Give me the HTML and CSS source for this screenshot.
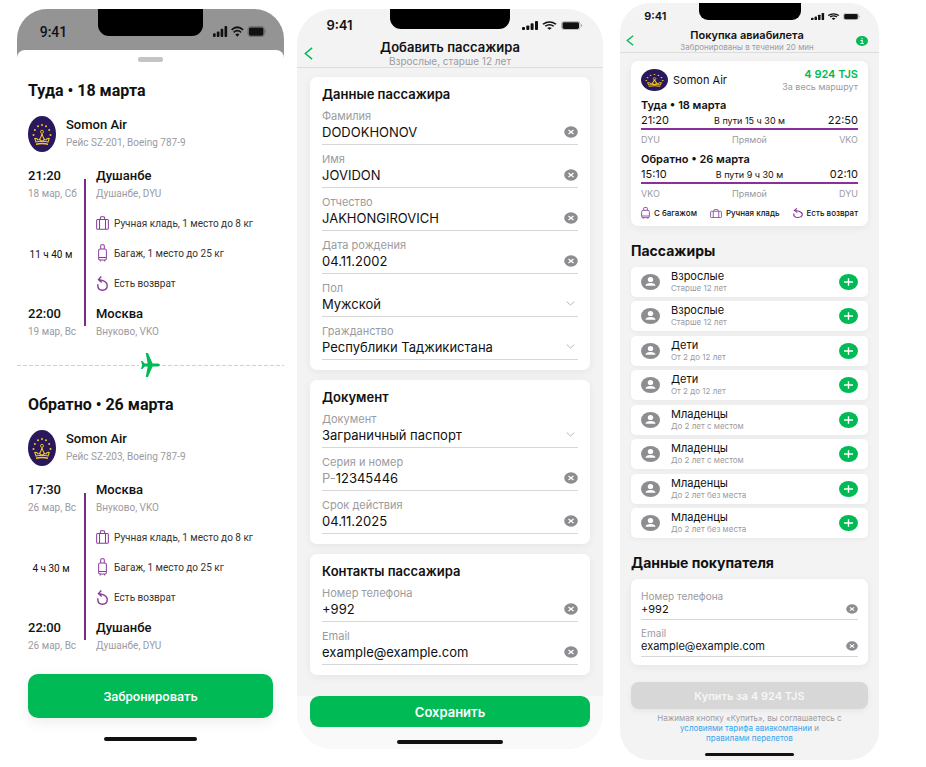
FILE: index.html
```
<!DOCTYPE html>
<html lang="ru">
<head>
  <meta charset="UTF-8">
  <meta name="viewport" content="width=device-width, initial-scale=1.0">
  <title>Покупка авиабилета</title>
  <link rel="stylesheet" href="styles.css">
</head>
<body>
  <svg class="sprite" aria-hidden="true">
    <symbol id="status" viewBox="0 0 61 12" preserveAspectRatio="none">
      <rect x="0" y="8" width="3" height="4" rx="1"/>
      <rect x="4.3" y="6" width="3" height="6" rx="1"/>
      <rect x="8.6" y="3" width="3" height="9" rx="1"/>
      <rect x="13" y="0" width="3" height="12" rx="1"/>
      <path d="M21 4.3Q27.500-1.500 34 4.300M23.300 6.900Q27.500 3.100 31.700 6.900" fill="none" stroke="currentColor" stroke-width="1.900"/>
      <path d="M25.200 9.300Q27.500 7.300 29.800 9.300L27.500 11.800Z"/>
      <rect x="39.500" y=".5" width="18.500" height="11" rx="3" fill="none" stroke="currentColor" stroke-opacity=".3"/>
      <rect x="40.500" y="1.500" width="16.500" height="9" rx="1.800"/>
      <path d="M59 4Q61 6 59 8Z" opacity=".4"/>
    </symbol>
    <symbol id="somon" viewBox="0 0 28 36" preserveAspectRatio="none">
      <ellipse cx="14" cy="18" rx="14" ry="18" fill="#2a185c"/>
      <g fill="#f2c91d">
        <circle cx="14" cy="9" r="1"/><circle cx="10" cy="10.300" r="1"/><circle cx="18" cy="10.300" r="1"/>
        <circle cx="6.800" cy="14" r="1"/><circle cx="21.200" cy="14" r="1"/>
        <circle cx="5.500" cy="19" r="1"/><circle cx="22.500" cy="19" r="1"/>
        <path d="M8 27.500Q14 26 20 27.500V29Q14 27.700 8 29Z"/>
      </g>
      <path d="M8 26L6.800 22.500Q9 22 10 24Q12.500 24 14 17.500Q15.500 24 18 24Q19 22 21.200 22.500L20 26Q14 24.500 8 26ZM11 23L14 25.500L17 23" fill="none" stroke="#f2c91d" stroke-width="1.100"/>
      <circle cx="14" cy="15.800" r="1.500" fill="none" stroke="#f2c91d" stroke-width=".9"/>
    </symbol>
    <symbol id="bag" viewBox="0 0 14 14" preserveAspectRatio="none">
      <path d="M1.800 3.500H12.200Q13.300 3.500 13.300 4.600V12.200Q13.300 13.300 12.200 13.300H1.800Q.7 13.300.7 12.200V4.600Q.7 3.500 1.800 3.500ZM3.800 3.500V13.300M10.200 3.500V13.300M4.700 3.300V1.700Q4.700.7 5.700.7H8.300Q9.300.7 9.300 1.700V3.300" fill="none" stroke="currentColor" stroke-width="1.100"/>
    </symbol>
    <symbol id="case" viewBox="0 0 10 18" preserveAspectRatio="none">
      <path d="M2.500 5H7.500Q9.300 5 9.300 6.800V14.500Q9.300 16 7.800 16H2.200Q.7 16 .7 14.500V6.800Q.7 5 2.500 5ZM3 5V1.700Q3 .7 4 .7H6Q7 .7 7 1.700V5M.7 13.500H9.300M2.500 16V17.500M7.500 16V17.500" fill="none" stroke="currentColor" stroke-width="1.100"/>
    </symbol>
    <symbol id="refund" viewBox="0 0 11 15" preserveAspectRatio="none">
      <path d="M4.300.5L1.500 3.600L4.800 6.500M1.800 3.600Q4.500 4 6.500 4.900Q10.200 6.500 10.200 9.500Q10.200 14.200 5.500 14.200Q.8 14.200.8 9.300V8.200" fill="none" stroke="currentColor" stroke-width="1.400"/>
    </symbol>
    <symbol id="plane" viewBox="0 0 20 24" preserveAspectRatio="none">
      <path d="M0 8H1.500L4 10.500H7L5 0H7.300L12.200 10.400H17.800Q20 10.700 20 12Q20 13.300 17.800 13.600H12.200L7.300 24H5L7 13.500H4L1.500 16H0L1.200 12Z"/>
    </symbol>
    <symbol id="back" viewBox="0 0 10 14" preserveAspectRatio="none">
      <path d="M9 1L1.500 7L9 13" fill="none" stroke="currentColor" stroke-width="1.700"/>
    </symbol>
    <symbol id="clear" viewBox="0 0 14 12" preserveAspectRatio="none">
      <ellipse cx="7" cy="6" rx="6.800" ry="5.700" fill="#8c8c91"/>
      <path d="M4.500 4L9.500 8M9.500 4L4.500 8" stroke="#fff" stroke-width="1.300"/>
    </symbol>
    <symbol id="down" viewBox="0 0 10 5" preserveAspectRatio="none">
      <path d="M.7.6L5 4L9.300.6" fill="none" stroke="currentColor"/>
    </symbol>
    <symbol id="user" viewBox="0 0 19 16" preserveAspectRatio="none">
      <ellipse cx="9.500" cy="8" rx="9.500" ry="8" fill="#8c8c91"/>
      <ellipse cx="9.500" cy="5.500" rx="2.700" ry="2.600" fill="#fff"/>
      <path d="M4.500 11.800Q4.800 9 9.500 9Q14.200 9 14.500 11.800Z" fill="#fff"/>
    </symbol>
    <symbol id="plus" viewBox="0 0 19 16" preserveAspectRatio="none">
      <ellipse cx="9.500" cy="8" rx="9.500" ry="8" fill="#00ba55"/>
      <path d="M5 8H14M9.500 4.200V11.800" stroke="#fff" stroke-width="1.400"/>
    </symbol>
    <symbol id="info" viewBox="0 0 11 10" preserveAspectRatio="none">
      <ellipse cx="5.500" cy="5" rx="5.500" ry="5" fill="#00ba55"/>
      <path d="M5.500 2V3.200M4.200 4.500H5.700V7.500M4 7.500H7.200" fill="none" stroke="#fff"/>
    </symbol>
  </svg>

  <main class="screens">
    <!-- Flight details -->
    <section class="phone phone-details">
      <div class="status">
        <span class="clock">9:41</span><span class="notch"></span>
        <svg class="status-icons"><use href="#status"/></svg>
      </div>
      <div class="sheet">
        <div class="grabber"></div>
        <article class="flight">
          <h2>Туда • 18 марта</h2>
          <div class="airline">
            <svg class="logo"><use href="#somon"/></svg>
            <div><strong>Somon Air</strong><small>Рейс SZ-201, Boeing 787-9</small></div>
          </div>
          <div class="route">
            <div class="times">
              <div><strong>21:20</strong><small>18 мар, Сб</small></div>
              <span class="duration">11 ч 40 м</span>
              <div><strong>22:00</strong><small>19 мар, Вс</small></div>
            </div>
            <div class="line"></div>
            <div class="stops">
              <div><strong>Душанбе</strong><small>Душанбе, DYU</small></div>
              <ul class="options">
                <li><svg class="icon-bag"><use href="#bag"/></svg>Ручная кладь, 1 место до 8 кг</li>
                <li><svg class="icon-case"><use href="#case"/></svg>Багаж, 1 место до 25 кг</li>
                <li><svg class="icon-refund"><use href="#refund"/></svg>Есть возврат</li>
              </ul>
              <div><strong>Москва</strong><small>Внуково, VKO</small></div>
            </div>
          </div>
        </article>
        <div class="divider"><svg class="plane"><use href="#plane"/></svg></div>
        <article class="flight">
          <h2>Обратно • 26 марта</h2>
          <div class="airline">
            <svg class="logo"><use href="#somon"/></svg>
            <div><strong>Somon Air</strong><small>Рейс SZ-203, Boeing 787-9</small></div>
          </div>
          <div class="route">
            <div class="times">
              <div><strong>17:30</strong><small>26 мар, Вс</small></div>
              <span class="duration">4 ч 30 м</span>
              <div><strong>22:00</strong><small>26 мар, Вс</small></div>
            </div>
            <div class="line"></div>
            <div class="stops">
              <div><strong>Москва</strong><small>Внуково, VKO</small></div>
              <ul class="options">
                <li><svg class="icon-bag"><use href="#bag"/></svg>Ручная кладь, 1 место до 8 кг</li>
                <li><svg class="icon-case"><use href="#case"/></svg>Багаж, 1 место до 25 кг</li>
                <li><svg class="icon-refund"><use href="#refund"/></svg>Есть возврат</li>
              </ul>
              <div><strong>Душанбе</strong><small>Душанбе, DYU</small></div>
            </div>
          </div>
        </article>
        <button class="button" type="button">Забронировать</button>
        <div class="home"></div>
      </div>
    </section>

    <!-- Add passenger -->
    <section class="phone phone-passenger">
      <div class="status">
        <span class="clock">9:41</span><span class="notch"></span>
        <svg class="status-icons"><use href="#status"/></svg>
      </div>
      <header class="topbar">
        <button class="icon-button" type="button" aria-label="Назад"><svg class="icon-back"><use href="#back"/></svg></button>
        <div class="topbar-title"><h1>Добавить пассажира</h1><p>Взрослые, старше 12 лет</p></div>
      </header>
      <form class="content">
        <fieldset class="card">
          <h3>Данные пассажира</h3>
          <div class="field">
            <label for="surname">Фамилия</label>
            <div class="control"><input id="surname" type="text" value="DODOKHONOV"><button class="icon-button" type="button" aria-label="Очистить"><svg class="icon-clear"><use href="#clear"/></svg></button></div>
          </div>
          <div class="field">
            <label for="name">Имя</label>
            <div class="control"><input id="name" type="text" value="JOVIDON"><button class="icon-button" type="button" aria-label="Очистить"><svg class="icon-clear"><use href="#clear"/></svg></button></div>
          </div>
          <div class="field">
            <label for="patronymic">Отчество</label>
            <div class="control"><input id="patronymic" type="text" value="JAKHONGIROVICH"><button class="icon-button" type="button" aria-label="Очистить"><svg class="icon-clear"><use href="#clear"/></svg></button></div>
          </div>
          <div class="field">
            <label for="birth">Дата рождения</label>
            <div class="control"><input id="birth" type="text" value="04.11.2002"><button class="icon-button" type="button" aria-label="Очистить"><svg class="icon-clear"><use href="#clear"/></svg></button></div>
          </div>
          <div class="field">
            <label for="sex">Пол</label>
            <div class="control"><select id="sex"><option>Мужской</option></select><svg class="icon-down"><use href="#down"/></svg></div>
          </div>
          <div class="field">
            <label for="country">Гражданство</label>
            <div class="control"><select id="country"><option>Республики Таджикистана</option></select><svg class="icon-down"><use href="#down"/></svg></div>
          </div>
        </fieldset>
        <fieldset class="card">
          <h3>Документ</h3>
          <div class="field">
            <label for="document">Документ</label>
            <div class="control"><select id="document"><option>Заграничный паспорт</option></select><svg class="icon-down"><use href="#down"/></svg></div>
          </div>
          <div class="field">
            <label for="number">Серия и номер</label>
            <div class="control"><span class="prefix">P-</span><input id="number" type="text" value="12345446"><button class="icon-button" type="button" aria-label="Очистить"><svg class="icon-clear"><use href="#clear"/></svg></button></div>
          </div>
          <div class="field">
            <label for="expires">Срок действия</label>
            <div class="control"><input id="expires" type="text" value="04.11.2025"><button class="icon-button" type="button" aria-label="Очистить"><svg class="icon-clear"><use href="#clear"/></svg></button></div>
          </div>
        </fieldset>
        <fieldset class="card">
          <h3>Контакты пассажира</h3>
          <div class="field">
            <label for="phone">Номер телефона</label>
            <div class="control"><input id="phone" type="tel" value="+992"><button class="icon-button" type="button" aria-label="Очистить"><svg class="icon-clear"><use href="#clear"/></svg></button></div>
          </div>
          <div class="field">
            <label for="email">Email</label>
            <div class="control"><input id="email" type="email" value="example@example.com"><button class="icon-button" type="button" aria-label="Очистить"><svg class="icon-clear"><use href="#clear"/></svg></button></div>
          </div>
        </fieldset>
      </form>
      <footer class="actions">
        <button class="button" type="button">Сохранить</button>
        <div class="home"></div>
      </footer>
    </section>

    <!-- Checkout -->
    <section class="phone phone-checkout">
      <div class="status">
        <span class="clock">9:41</span><span class="notch"></span>
        <svg class="status-icons"><use href="#status"/></svg>
      </div>
      <header class="topbar">
        <button class="icon-button" type="button" aria-label="Назад"><svg class="icon-back"><use href="#back"/></svg></button>
        <div class="topbar-title"><h1>Покупка авиабилета</h1><p>Забронированы в течении 20 мин</p></div>
        <button class="icon-button" type="button" aria-label="Информация"><svg class="icon-info"><use href="#info"/></svg></button>
      </header>
      <div class="content">
        <article class="card ticket">
          <div class="ticket-head">
            <svg class="logo"><use href="#somon"/></svg>
            <span class="ticket-airline">Somon Air</span>
            <div class="price"><strong>4 924 TJS</strong><small>За весь маршрут</small></div>
          </div>
          <div class="leg">
            <h3>Туда • 18 марта</h3>
            <div class="leg-row"><span>21:20</span><span class="leg-duration">В пути 15 ч 30 м</span><span>22:50</span></div>
            <div class="leg-row codes"><span>DYU</span><span>Прямой</span><span>VKO</span></div>
          </div>
          <div class="leg">
            <h3>Обратно • 26 марта</h3>
            <div class="leg-row"><span>15:10</span><span class="leg-duration">В пути 9 ч 30 м</span><span>02:10</span></div>
            <div class="leg-row codes"><span>VKO</span><span>Прямой</span><span>DYU</span></div>
          </div>
          <ul class="features">
            <li><svg class="icon-case"><use href="#case"/></svg>С багажом</li>
            <li><svg class="icon-bag"><use href="#bag"/></svg>Ручная кладь</li>
            <li><svg class="icon-refund"><use href="#refund"/></svg>Есть возврат</li>
          </ul>
        </article>

        <h2>Пассажиры</h2>
        <div class="groups">
          <ul class="group">
            <li class="person"><svg class="icon-user"><use href="#user"/></svg><div><span>Взрослые</span><small>Старше 12 лет</small></div><button class="icon-button" type="button" aria-label="Добавить"><svg class="icon-user"><use href="#plus"/></svg></button></li>
            <li class="person"><svg class="icon-user"><use href="#user"/></svg><div><span>Взрослые</span><small>Старше 12 лет</small></div><button class="icon-button" type="button" aria-label="Добавить"><svg class="icon-user"><use href="#plus"/></svg></button></li>
          </ul>
          <ul class="group">
            <li class="person"><svg class="icon-user"><use href="#user"/></svg><div><span>Дети</span><small>От 2 до 12 лет</small></div><button class="icon-button" type="button" aria-label="Добавить"><svg class="icon-user"><use href="#plus"/></svg></button></li>
            <li class="person"><svg class="icon-user"><use href="#user"/></svg><div><span>Дети</span><small>От 2 до 12 лет</small></div><button class="icon-button" type="button" aria-label="Добавить"><svg class="icon-user"><use href="#plus"/></svg></button></li>
          </ul>
          <ul class="group">
            <li class="person"><svg class="icon-user"><use href="#user"/></svg><div><span>Младенцы</span><small>До 2 лет с местом</small></div><button class="icon-button" type="button" aria-label="Добавить"><svg class="icon-user"><use href="#plus"/></svg></button></li>
            <li class="person"><svg class="icon-user"><use href="#user"/></svg><div><span>Младенцы</span><small>До 2 лет с местом</small></div><button class="icon-button" type="button" aria-label="Добавить"><svg class="icon-user"><use href="#plus"/></svg></button></li>
          </ul>
          <ul class="group">
            <li class="person"><svg class="icon-user"><use href="#user"/></svg><div><span>Младенцы</span><small>До 2 лет без места</small></div><button class="icon-button" type="button" aria-label="Добавить"><svg class="icon-user"><use href="#plus"/></svg></button></li>
            <li class="person"><svg class="icon-user"><use href="#user"/></svg><div><span>Младенцы</span><small>До 2 лет без места</small></div><button class="icon-button" type="button" aria-label="Добавить"><svg class="icon-user"><use href="#plus"/></svg></button></li>
          </ul>
        </div>

        <h2>Данные покупателя</h2>
        <form class="card buyer">
          <div class="field">
            <label for="buyer-phone">Номер телефона</label>
            <div class="control"><input id="buyer-phone" type="tel" value="+992"><button class="icon-button" type="button" aria-label="Очистить"><svg class="icon-clear"><use href="#clear"/></svg></button></div>
          </div>
          <div class="field">
            <label for="buyer-email">Email</label>
            <div class="control"><input id="buyer-email" type="email" value="example@example.com"><button class="icon-button" type="button" aria-label="Очистить"><svg class="icon-clear"><use href="#clear"/></svg></button></div>
          </div>
        </form>
        <button class="button" type="button" disabled>Купить за 4 924 TJS</button>
        <p class="legal">Нажимая кнопку «Купить», вы соглашаетесь с<br><a href="#">условиями тарифа авиакомпании</a> и<br><a href="#">правилами перелетов</a></p>
      </div>
      <div class="home"></div>
    </section>
  </main>
</body>
</html>
```
FILE: styles.css
```
* {
  box-sizing: border-box;
}
body {
  margin: 0;
  background: #fff;
  color: #111;
  font-family: Inter, Roboto, sans-serif;
}
h1, h2, h3, p, ul, fieldset {
  margin: 0;
  padding: 0;
  border: 0;
  min-width: 0;
}
h1, h3 {
  font-weight: 600;
}
ul {
  list-style: none;
}
svg {
  display: block;
  flex: none;
  fill: currentColor;
}
small {
  display: block;
  color: #9b9b9f;
}
.sprite {
  position: absolute;
  width: 0;
  height: 0;
}
.screens {
  display: flex;
  align-items: flex-start;
  gap: 13px;
  padding: 3px 47px 0 17px;
}
.phone {
  min-width: 0;
  overflow: hidden;
  background: #f3f3f3;
}
.status {
  display: grid;
  justify-items: center;
}
.clock {
  padding-right: 8px;
  font-weight: 600;
}
.notch {
  width: 100%;
  background: #000;
}
.status-icons {
  margin-right: 8px;
}
.home {
  width: 34%;
  height: 4px;
  margin: 0 auto;
  border-radius: 2px;
  background: #111;
}
.button {
  display: block;
  width: 100%;
  padding: 0;
  border: 0;
  background: #00ba55;
  color: #fff;
  font-family: inherit;
  font-weight: 600;
}
.icon-button {
  flex: none;
  padding: 0;
  border: 0;
  background: none;
  color: #00ba55;
}

/* flight details */
.phone-details {
  flex: 267 1 0;
  margin-top: 6px;
  border-radius: 30px 30px 0 0;
  background: #949494;
  font-family: Roboto, sans-serif;
}
.phone-details .status {
  grid-template-columns: 1fr 105px 1fr;
  height: 41px;
}
.phone-details .clock {
  font-size: 14px;
  font-weight: 500;
  line-height: 46px;
}
.phone-details .notch {
  height: 27px;
  border-radius: 0 0 11px 11px;
}
.phone-details .status-icons {
  width: 54px;
  height: 11px;
  margin-top: 17px;
}
.sheet {
  padding: 7px 11px 17px;
  border-radius: 8px 8px 0 0;
  background: #fff;
}
.grabber {
  width: 25px;
  height: 5px;
  margin: 0 auto 15px;
  border-radius: 2px;
  background: #c4c4c6;
}
.flight h2 {
  margin-bottom: 11px;
  font-size: 16px;
  line-height: 28px;
}
.flight strong {
  display: block;
  font-size: 13px;
  font-weight: 500;
  line-height: 18px;
  white-space: nowrap;
}
.flight small {
  font-size: 10px;
  line-height: 18px;
  white-space: nowrap;
}
.airline {
  display: flex;
  align-items: flex-end;
  gap: 10px;
  margin-bottom: 15px;
}
.airline .logo {
  width: 28px;
  height: 36px;
}
.route {
  display: grid;
  grid-template-columns: 46px 2px 1fr;
  gap: 10px;
}
.times, .stops {
  display: flex;
  flex-direction: column;
  justify-content: space-between;
}
.duration {
  text-align: center;
  font-size: 10px;
  white-space: nowrap;
}
.line {
  margin: 12px 0 15px;
  background: #7b2a8c;
}
.options {
  margin: 5px 0 7px;
}
.options li {
  display: flex;
  align-items: center;
  gap: 5px;
  height: 30px;
  font-size: 10px;
  color: #333;
}
.options svg {
  color: #8b3a9c;
}
.options .icon-bag {
  width: 13px;
  height: 14px;
}
.options .icon-case {
  width: 9px;
  height: 18px;
  margin: 0 2px;
}
.options .icon-refund {
  width: 11px;
  height: 15px;
  margin: 0 1px;
}
.divider {
  display: flex;
  align-items: center;
  gap: 2px;
  margin: 12px -11px 14px;
  color: #00ba55;
}
.divider::before, .divider::after {
  content: "";
  flex: 1;
  height: 1px;
  background: repeating-linear-gradient(90deg, #d0d0d0 0 4px, #fff 4px 6px);
}
.plane {
  width: 19px;
  height: 24px;
}
.sheet .button {
  height: 44px;
  margin: 19px 0;
  border-radius: 10px;
  font-size: 13px;
  font-weight: 500;
  box-shadow: 0 4px 14px rgba(0, 0, 0, .08);
}
.sheet .home, .actions .home {
  width: 38%;
}

/* shared by the two form screens */
.topbar {
  display: grid;
  grid-template-columns: 1fr auto 1fr;
  align-items: center;
  border-bottom: 1px solid #dcdcdc;
}
.topbar .icon-button {
  justify-self: start;
}
.topbar .icon-button:last-child {
  justify-self: end;
}
.topbar-title {
  text-align: center;
}
.topbar p {
  color: #9b9b9f;
}
.icon-back {
  width: 9px;
  height: 13px;
}
.card {
  border-radius: 7px;
  background: #fff;
  box-shadow: 0 2px 8px rgba(0, 0, 0, .06);
}
.field {
  border-bottom: 1px solid #d6d6d6;
}
.field label {
  display: block;
  color: #9b9b9f;
}
.control {
  display: flex;
  align-items: center;
  position: relative;
}
.prefix {
  color: #9b9b9f;
}
.control input, .control select {
  flex: 1;
  min-width: 0;
  height: 100%;
  padding: 0;
  border: 0;
  appearance: none;
  background: none;
  color: #111;
  font: inherit;
}
.icon-down {
  position: absolute;
  right: 3px;
  width: 9px;
  height: 5px;
  color: #b5b5b8;
  pointer-events: none;
}

/* add passenger */
.phone-passenger {
  flex: 306 1 0;
  margin-top: 6px;
  border-radius: 36px;
}
.phone-passenger .status {
  grid-template-columns: 1fr 120px 1fr;
  height: 30px;
}
.phone-passenger .clock {
  font-size: 13px;
  line-height: 32px;
}
.phone-passenger .notch {
  height: 20px;
  border-radius: 0 0 11px 11px;
}
.phone-passenger .status-icons {
  width: 61px;
  height: 9px;
  margin-top: 12px;
}
.phone-passenger .topbar {
  padding: 0 7px;
}
.phone-passenger h1 {
  font-size: 13px;
  line-height: 16px;
}
.phone-passenger .topbar p {
  font-size: 10px;
  line-height: 12px;
}
.phone-passenger .content {
  display: grid;
  gap: 10px;
  padding: 9px 13px 21px;
}
.phone-passenger .card {
  padding: 9px 12px 10px;
}
.phone-passenger h3 {
  margin-bottom: 8px;
  font-size: 13px;
  line-height: 16px;
}
.phone-passenger .field + .field {
  margin-top: 8px;
}
.phone-passenger label {
  font-size: 11px;
  line-height: 13px;
}
.phone-passenger .control {
  height: 21px;
  padding-bottom: 4px;
  font-size: 13px;
}
.phone-passenger .icon-clear {
  width: 14px;
  height: 12px;
}
.actions {
  padding: 0 13px 5px;
  background: #f9f9f9;
}
.actions .button {
  height: 31px;
  margin-bottom: 13px;
  border-radius: 9px;
  font-size: 13px;
}

/* checkout */
.phone-checkout {
  flex: 259 1 0;
  margin-left: 4px;
  border-radius: 30px;
  padding-bottom: 4px;
}
.phone-checkout .status {
  grid-template-columns: 1fr 102px 1fr;
  height: 26px;
}
.phone-checkout .clock {
  font-size: 11px;
  line-height: 27px;
}
.phone-checkout .notch {
  height: 17px;
  border-radius: 0 0 9px 9px;
}
.phone-checkout .status-icons {
  width: 50px;
  height: 7px;
  margin-top: 10px;
}
.phone-checkout .topbar {
  padding: 0 11px 0 6px;
}
.phone-checkout .icon-back {
  width: 8px;
  height: 11px;
}
.icon-info {
  width: 12px;
  height: 10px;
}
.phone-checkout h1 {
  font-size: 11px;
  line-height: 13px;
}
.phone-checkout .topbar p {
  font-size: 8px;
  line-height: 10px;
}
.phone-checkout .content {
  padding: 8px 11px 10px;
}
.ticket {
  padding: 7px 10px 6px;
}
.ticket-head {
  display: flex;
  align-items: center;
  gap: 5px;
  margin-bottom: 6px;
}
.ticket .logo {
  width: 27px;
  height: 22px;
}
.ticket-airline {
  font-size: 11px;
}
.price {
  margin-left: auto;
  text-align: right;
}
.price strong {
  display: block;
  font-size: 11px;
  font-weight: 600;
  line-height: 13px;
  color: #00ba55;
}
.price small {
  font-size: 9px;
  line-height: 11px;
}
.leg {
  margin-bottom: 6px;
}
.leg h3 {
  font-size: 11px;
  line-height: 14px;
}
.leg-row {
  display: grid;
  grid-template-columns: 1fr auto 1fr;
  align-items: center;
  height: 18px;
  border-bottom: 2px solid #8b2f9a;
  font-size: 11px;
}
.leg-row span:last-child {
  text-align: right;
}
.leg-row .leg-duration {
  font-size: 9px;
}
.leg-row.codes {
  height: 16px;
  padding-top: 3px;
  border: 0;
  font-size: 9px;
  color: #9b9b9f;
}
.features {
  display: flex;
  justify-content: space-between;
  font-size: 8px;
  font-weight: 500;
}
.features li {
  display: flex;
  align-items: center;
  gap: 4px;
  height: 14px;
}
.features svg {
  color: #8b3a9c;
}
.features .icon-case {
  width: 9px;
  height: 12px;
}
.features .icon-bag {
  width: 12px;
  height: 9px;
}
.features .icon-refund {
  width: 10px;
  height: 10px;
}
.phone-checkout h2 {
  margin: 16px 0 7px;
  font-size: 14px;
  line-height: 18px;
}
.groups {
  display: grid;
  gap: 5px;
}
.group {
  display: grid;
  gap: 4px;
}
.person {
  display: flex;
  align-items: center;
  gap: 11px;
  height: 30px;
  padding: 0 10px;
  border-radius: 5px;
  background: #fff;
  box-shadow: 0 1px 5px rgba(0, 0, 0, .05);
}
.person div {
  flex: 1;
}
.person span {
  display: block;
  font-size: 11px;
  line-height: 13px;
}
.person small {
  font-size: 8px;
  line-height: 11px;
}
.icon-user {
  width: 19px;
  height: 16px;
}
.buyer {
  padding: 11px 10px 8px;
}
.buyer .field + .field {
  margin-top: 7px;
}
.buyer label {
  font-size: 10px;
  line-height: 12px;
}
.buyer .control {
  height: 17px;
  padding-bottom: 3px;
  font-size: 11px;
}
.buyer .icon-clear {
  width: 12px;
  height: 10px;
}
.phone-checkout .button {
  height: 27px;
  margin-top: 17px;
  border-radius: 8px;
  font-size: 11px;
}
.button:disabled {
  background: #d7d7d7;
  color: #f6f6f6;
  box-shadow: 0 2px 6px rgba(0, 0, 0, .06);
}
.legal {
  margin-top: 4px;
  text-align: center;
  font-size: 8px;
  line-height: 10px;
  color: #9b9b9f;
}
.legal a {
  color: #38a5ee;
  text-decoration: none;
}
.phone-checkout .home {
  height: 3px;
}
```
